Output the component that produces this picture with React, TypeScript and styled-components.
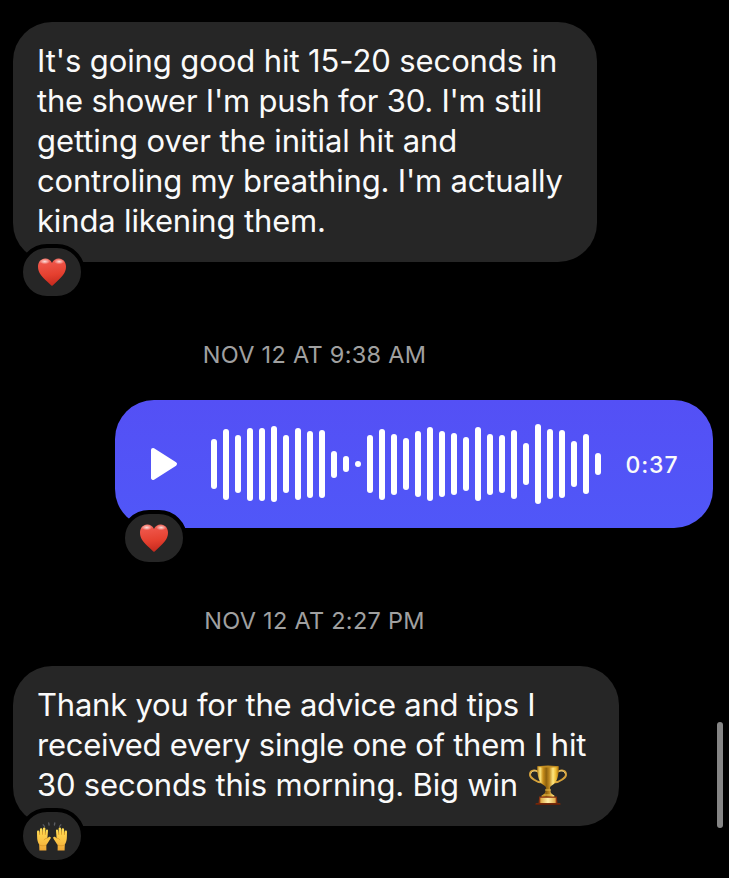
import type { ReactNode } from "react"
import styled, { createGlobalStyle } from "styled-components"

const BubbleColor = "#262626"
const BackgroundColor = "#000"

// bar heights of the voice message, left to right
const waveHeights = [
    50, 71, 58, 73, 73, 76, 58, 72, 67, 68, 27, 16, 6, 58, 71, 61, 52,
    66, 74, 66, 62, 54, 74, 61, 58, 69, 42, 80, 70, 68, 46, 60, 22,
]

interface ISideProps {
    $sent?: boolean;
}

interface IWidthProps {
    $width: number;
}

interface ISpacingProps {
    $spacing?: number;
}

interface IMessageProps {
    sent?: boolean;
    reaction: ReactNode;
    children: ReactNode;
}

const Message = (props: IMessageProps) => {
    return (
        <MessageRow $sent={props.sent}>
            <BubbleAnchor>
                {props.children}
                <Reaction>{props.reaction}</Reaction>
            </BubbleAnchor>
        </MessageRow>
    )
}

const Heart = () => {
    return (
        <svg width={30} height={30} viewBox="0 0 30 30" aria-label="heart">
            <defs>
                <linearGradient id="heartFill" x1="0" y1="0" x2="0.15" y2="1">
                    <stop offset="0" stopColor="#f8877b" />
                    <stop offset="0.2" stopColor="#ee5549" />
                    <stop offset="0.65" stopColor="#e5402f" />
                    <stop offset="1" stopColor="#c92c20" />
                </linearGradient>
                <radialGradient id="heartShine">
                    <stop offset="0" stopColor="#fff" stopOpacity="0.8" />
                    <stop offset="1" stopColor="#fff" stopOpacity="0" />
                </radialGradient>
            </defs>
            <path
                d="M15 28.8C14.3 28.8 12.6 26.7 10.4 24.8C5.2 20 1 15.8 1 9.7C1 5.2 4 1.6 8.2 1.6C11.2 1.6 13.8 3.4 15 6C16.2 3.4 18.8 1.6 21.8 1.6C26 1.6 29 5.2 29 9.7C29 15.8 24.8 20 19.6 24.8C17.4 26.7 15.7 28.8 15 28.8Z"
                fill="url(#heartFill)"
            />
            <ellipse cx="7.8" cy="4.6" rx="5.2" ry="2.6" fill="url(#heartShine)" />
            <ellipse cx="22.2" cy="4.6" rx="5.2" ry="2.6" fill="url(#heartShine)" />
        </svg>
    )
}

const Hand = () => {
    return (
        <>
            <path
                d="M3.4 30.4L3.2 24.6C1.8 22.6 1.1 20 1.1 16.6L1 11.7C1 10.2 3.1 10.1 3.3 11.6L3.7 14.8L3.9 9.4C4 7.8 6.3 7.8 6.4 9.4L6.5 14.2L7 8.5C7.2 6.9 9.4 7.1 9.4 8.7L9.2 14.6L9.9 10.5C10.2 9 12.1 9.3 12 10.8L11.4 18.2L12.8 17.1C14 16.3 15.4 17.3 14.6 18.5L12.2 22.2C11.6 23.2 10.9 24.2 10.3 24.9L10.4 30.4Z"
                fill="url(#handFill)"
            />
            <path d="M3.6 15V12M6.5 14.8V11M9.2 15L9.4 12M3.5 25.1C5.5 26 8.4 26 10.2 25.1M8 20.2C8.6 18.8 10 18.2 11.4 18.4" fill="none" stroke="#d28c20" strokeWidth="0.6" />
        </>
    )
}

const RaisedHands = () => {
    return (
        <svg width={32} height={32} viewBox="0 0 32 32" aria-label="raised hands">
            <defs>
                <linearGradient id="handFill" x1="0" y1="0" x2="0" y2="1">
                    <stop offset="0" stopColor="#ffdf55" />
                    <stop offset="0.6" stopColor="#fac244" />
                    <stop offset="1" stopColor="#eda635" />
                </linearGradient>
            </defs>
            <path d="M7.2 4.8L8.5 6.4M12.7 3L13.1 5M18.8 3L18.4 5M24.8 4.8L23.5 6.4" stroke="#5b5d63" strokeWidth="1.3" strokeLinecap="round" />
            <Hand />
            <g transform="translate(32 0) scale(-1 1)">
                <Hand />
            </g>
        </svg>
    )
}

const Trophy = () => {
    return (
        <TrophyIcon width={40} height={42} viewBox="0 0 40 42" aria-label="trophy">
            <defs>
                <linearGradient id="cupFill" x1="0" y1="0" x2="1" y2="0">
                    <stop offset="0" stopColor="#b47b12" />
                    <stop offset="0.14" stopColor="#fbe37b" />
                    <stop offset="0.27" stopColor="#c98e19" />
                    <stop offset="0.42" stopColor="#8e620e" />
                    <stop offset="0.56" stopColor="#bd8820" />
                    <stop offset="0.73" stopColor="#ffe681" />
                    <stop offset="0.87" stopColor="#eebb31" />
                    <stop offset="1" stopColor="#a66c0d" />
                </linearGradient>
                <linearGradient id="plateFill" x1="0" y1="0" x2="1" y2="0">
                    <stop offset="0" stopColor="#dca541" />
                    <stop offset="0.5" stopColor="#fff0a9" />
                    <stop offset="1" stopColor="#dfa946" />
                </linearGradient>
            </defs>
            <path d="M11 7.6C8.8 4.2 2.5 4.7 2 8.9C1.5 12.7 4.3 13.3 6.2 14.7C8.5 16.3 10.5 17.4 13.2 17.2M29 7.6C31.2 4.2 37.5 4.7 38 8.9C38.5 12.7 35.7 13.3 33.8 14.7C31.5 16.3 29.5 17.4 26.8 17.2" fill="none" stroke="#d6a23b" strokeWidth="1.9" />
            <path d="M9.2 6.5C6.8 5.1 3.4 6.2 3 8.5M30.8 6.5C33.2 5.1 36.6 6.2 37 8.5" fill="none" stroke="#f7dc8b" strokeWidth="0.9" />
            <path d="M9.2 1.4C9.2 10.6 10.8 16.6 14.8 19.6C17 21.1 18 21.8 18 23C18 24.2 17.2 24.5 17.5 25.5C17.7 27.4 16.6 29.4 13.6 30.5V32.6H26.4V30.5C23.4 29.4 22.3 27.4 22.5 25.5C22.8 24.5 22 24.2 22 23C22 21.8 23 21.1 25.2 19.6C29.2 16.6 30.8 10.6 30.8 1.4Z" fill="url(#cupFill)" />
            <ellipse cx="20" cy="1.6" rx="10.8" ry="1" fill="#c28d22" />
            <path d="M17.2 25H22.8M15.4 30H24.6" stroke="#e9bf4e" strokeWidth="1.1" />
            <path d="M11.2 31.5H28.8L29.4 38H32.2V40H7.8V38H10.6Z" fill="#8c3511" />
            <path d="M7.8 38.4H32.2V40H7.8Z" fill="#642009" />
            <rect x="12.3" y="32.8" width="15.4" height="5.2" fill="url(#plateFill)" />
        </TrophyIcon>
    )
}

const App = () => {
    return (
        <>
            <GlobalStyle />
            <Chat>
                <Message reaction={<Heart />}>
                    <TextBubble $width={584}>
                        <Line $spacing={-0.1}>It's going good hit 15-20 seconds in</Line>
                        <Line $spacing={-0.22}>the shower I'm push for 30. I'm still</Line>
                        <Line $spacing={-0.08}>getting over the initial hit and</Line>
                        <Line $spacing={-0.18}>controling my breathing. I'm actually</Line>
                        <Line $spacing={-0.15}>kinda likening them.</Line>
                    </TextBubble>
                </Message>

                <DateLabel>NOV 12 AT 9:38 AM</DateLabel>

                <Message sent reaction={<Heart />}>
                    <VoiceBubble>
                        <svg width={28} height={34} viewBox="0 0 28 34" aria-label="play">
                            <path d="M3 3L25 17L3 31Z" fill="#fff" stroke="#fff" strokeWidth="4" strokeLinejoin="round" />
                        </svg>
                        <Wave>
                            {waveHeights.map((height, i) => (
                                <WaveBar key={i} style={{ height }} />
                            ))}
                        </Wave>
                        <Duration>0:37</Duration>
                    </VoiceBubble>
                </Message>

                <DateLabel>NOV 12 AT 2:27 PM</DateLabel>

                <Message reaction={<RaisedHands />}>
                    <TextBubble $width={606}>
                        <Line $spacing={-0.23}>Thank you for the advice and tips I</Line>
                        <Line $spacing={-0.26}>received every single one of them I hit</Line>
                        <Line $spacing={-0.19}>30 seconds this morning. Big win <Trophy /></Line>
                    </TextBubble>
                </Message>
                <ScrollThumb />
            </Chat>
        </>
    )
}

export default App

const GlobalStyle = createGlobalStyle`
    body {
        margin: 0;
        background: ${BackgroundColor};
        font-family: Inter, "Liberation Sans", sans-serif;
    }
`

const Chat = styled.main`
    position: relative;
    box-sizing: border-box;
    width: 729px;
    height: 878px;
    padding: 22px 16px 0 13px;
    overflow: hidden;
    background: ${BackgroundColor};
    color: #fafafa;
`

const MessageRow = styled.div<ISideProps>`
    display: flex;
    justify-content: ${props => props.$sent ? 'flex-end' : 'flex-start'};
`

const BubbleAnchor = styled.div`
    position: relative;
`

const TextBubble = styled.div<IWidthProps>`
    box-sizing: border-box;
    width: ${props => props.$width}px;
    padding: 19px 0 21px 24px;
    border-radius: 39px;
    background: ${BubbleColor};
    font-size: 31px;
    line-height: 40px;
`

const Line = styled.div<ISpacingProps>`
    height: 40px;
    white-space: nowrap;
    letter-spacing: ${props => props.$spacing ?? 0}px;
`

const Reaction = styled.div`
    position: absolute;
    left: 6px;
    bottom: -38px;
    display: flex;
    align-items: center;
    justify-content: center;
    width: 58px;
    height: 48px;
    border: 4px solid ${BackgroundColor};
    border-radius: 28px;
    background: ${BubbleColor};
`

const DateLabel = styled.div`
    width: 603px;
    height: 32px;
    padding: 77px 0 29px;
    color: #a0a0a0;
    font-size: 23.5px;
    letter-spacing: 0.28px;
    line-height: 32px;
    text-align: center;
`

const VoiceBubble = styled.div`
    display: flex;
    align-items: center;
    box-sizing: border-box;
    width: 598px;
    height: 128px;
    padding-left: 35px;
    border-radius: 39px;
    background: linear-gradient(#5450f5, #5057f8);
`

const Wave = styled.div`
    display: flex;
    align-items: center;
    gap: 6px;
    margin-left: 33px;
`

const WaveBar = styled.span`
    width: 6px;
    border-radius: 3px;
    background: #fff;
`

const Duration = styled.span`
    padding-top: 2px;
    margin-left: 24.5px;
    font-size: 23px;
    font-weight: 500;
    letter-spacing: 0.9px;
`

const TrophyIcon = styled.svg`
    display: inline-block;
    margin: 0 0 -2px 2px;
    vertical-align: top;
`

const ScrollThumb = styled.div`
    position: absolute;
    top: 722px;
    right: 6px;
    width: 6px;
    height: 106px;
    border-radius: 3px;
    background: #858585;
`
